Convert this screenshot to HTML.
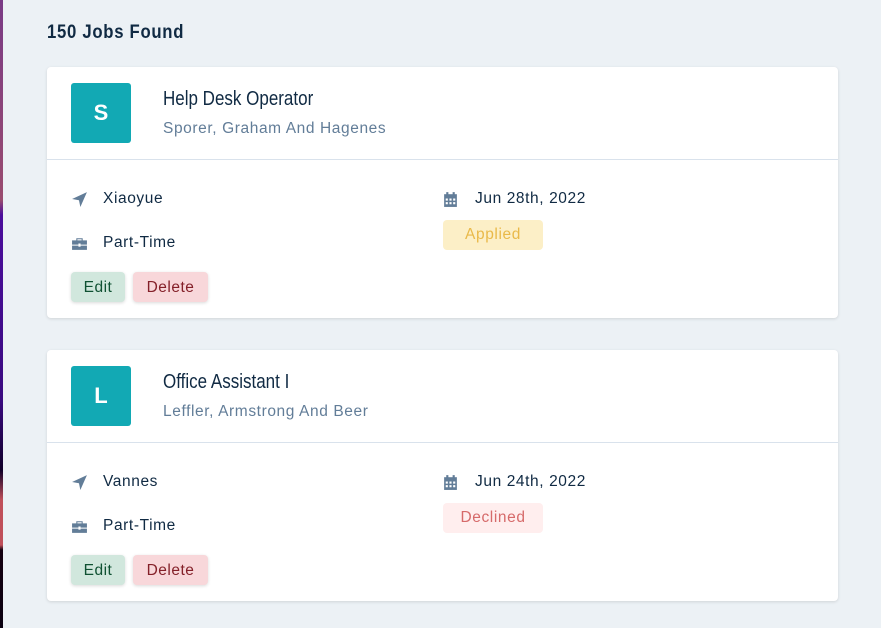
<!DOCTYPE html>
<html><head><style>
*{box-sizing:border-box;margin:0;padding:0}
body{width:881px;height:628px;overflow:hidden;background:#ecf1f5;font-family:"Liberation Sans",sans-serif;position:relative}
.strip{position:absolute;left:0;top:0;width:3px;height:628px;background:linear-gradient(#7a3b86 0,#9a4c6f 200px,#4b0d9c 215px,#3a0a80 400px,#100028 470px,#c0505a 500px,#c0505a 545px,#150010 550px,#0a0010 628px)}
h2{position:absolute;left:47px;top:22px;font-size:19px;font-weight:bold;color:#102a43;letter-spacing:0.8px;transform:scaleX(0.88);transform-origin:left}
.card{position:absolute;left:47px;width:791px;height:251px;background:#fff;border-radius:4px;box-shadow:0 1px 3px rgba(0,0,0,.12)}
.head{height:93px;border-bottom:1px solid #d9e2ec;position:relative}
.logo{position:absolute;left:24px;top:16px;width:60px;height:60px;background:#12a9b4;border-radius:3px;color:#fff;font-size:22px;font-weight:bold;text-align:center;line-height:60px}
.title{position:absolute;left:116px;top:21px;font-size:20px;color:#102a43;transform:scaleX(0.85);transform-origin:left;white-space:nowrap}
.comp{position:absolute;left:116px;top:53px;font-size:15.5px;color:#627d98;letter-spacing:0.6px}
.row{position:absolute;font-size:15.5px;color:#102a43;letter-spacing:0.6px}
.ic{position:absolute;left:0;top:1px}
.row span{position:absolute;left:32px;top:0;white-space:nowrap}
.badge{position:absolute;left:396px;top:153px;width:100px;height:30px;border-radius:4px;text-align:center;line-height:30px;font-size:15.5px;letter-spacing:0.6px}
.btn{position:absolute;top:205px;height:30px;border-radius:4px;line-height:31px;text-align:center;font-size:15.5px;letter-spacing:0.5px;box-shadow:0 1px 3px rgba(0,0,0,.15)}
.edit{left:24px;width:54px;background:#d1e7dd;color:#0f5132}
.del{left:86px;width:75px;background:#f8d7da;color:#842029}
</style></head><body>
<div class="strip"></div>
<h2>150 Jobs Found</h2>

<div class="card" style="top:67px">
 <div class="head"><div class="logo">S</div><div class="title">Help Desk Operator</div><div class="comp">Sporer, Graham And Hagenes</div></div>
 <div class="row" style="left:24px;top:123px"><svg class="ic" width="17" height="17" viewBox="0 0 16 16"><path d="M15 1L1 7.5l6.5 1.2L8.8 15z" fill="#627d98"/></svg><span>Xiaoyue</span></div>
 <div class="row" style="left:24px;top:167px"><svg class="ic" width="17" height="17" viewBox="0 0 16 16"><path d="M5 3h6v2H10V4H6v1H5z M1 5h14v4H1z M1 10h14v4H1z" fill="#627d98"/><rect x="7" y="8" width="2" height="3" fill="#fff"/></svg><span>Part-Time</span></div>
 <div class="row" style="left:396px;top:123px"><svg class="ic" width="15" height="17" viewBox="0 0 14 16"><path d="M1 3h12v12H1z" fill="#627d98"/><path d="M3 1h2v3H3zM9 1h2v3H9z" fill="#627d98"/><path d="M2.5 7h2v2h-2zM6 7h2v2H6zM9.5 7h2v2h-2zM2.5 10.5h2v2h-2zM6 10.5h2v2H6zM9.5 10.5h2v2h-2z" fill="#fff"/></svg><span>Jun 28th, 2022</span></div>
 <div class="badge" style="background:#fcefc7;color:#e9b949">Applied</div>
 <div class="btn edit">Edit</div><div class="btn del">Delete</div>
</div>

<div class="card" style="top:350px">
 <div class="head"><div class="logo">L</div><div class="title">Office Assistant I</div><div class="comp">Leffler, Armstrong And Beer</div></div>
 <div class="row" style="left:24px;top:123px"><svg class="ic" width="17" height="17" viewBox="0 0 16 16"><path d="M15 1L1 7.5l6.5 1.2L8.8 15z" fill="#627d98"/></svg><span>Vannes</span></div>
 <div class="row" style="left:24px;top:167px"><svg class="ic" width="17" height="17" viewBox="0 0 16 16"><path d="M5 3h6v2H10V4H6v1H5z M1 5h14v4H1z M1 10h14v4H1z" fill="#627d98"/><rect x="7" y="8" width="2" height="3" fill="#fff"/></svg><span>Part-Time</span></div>
 <div class="row" style="left:396px;top:123px"><svg class="ic" width="15" height="17" viewBox="0 0 14 16"><path d="M1 3h12v12H1z" fill="#627d98"/><path d="M3 1h2v3H3zM9 1h2v3H9z" fill="#627d98"/><path d="M2.5 7h2v2h-2zM6 7h2v2H6zM9.5 7h2v2h-2zM2.5 10.5h2v2h-2zM6 10.5h2v2H6zM9.5 10.5h2v2h-2z" fill="#fff"/></svg><span>Jun 24th, 2022</span></div>
 <div class="badge" style="background:#ffeeee;color:#d66a6a">Declined</div>
 <div class="btn edit">Edit</div><div class="btn del">Delete</div>
</div>
</body></html>
